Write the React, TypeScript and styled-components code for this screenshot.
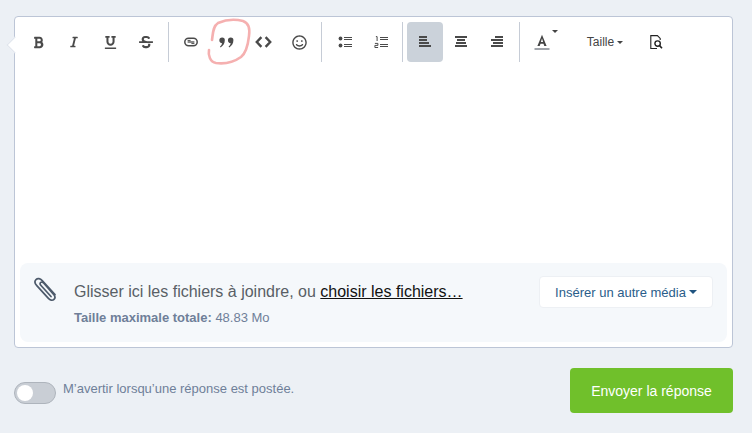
import React from 'react';
import styled, { createGlobalStyle } from 'styled-components';
import { FaBold, FaItalic, FaUnderline, FaStrikethrough, FaRegSmile } from 'react-icons/fa';

const GlobalStyle = createGlobalStyle`
  html, body {
    margin: 0;
    padding: 0;
    background: #fff;
  }
  body {
    font-family: 'Liberation Sans', Arial, sans-serif;
  }
`;

const Page = styled.div`
  position: relative;
  box-sizing: border-box;
  width: 752px;
  height: 433px;
  padding: 16px 19px 0 14px;
  background: #ecf0f5;
`;

const Editor = styled.div`
  position: relative;
  box-sizing: border-box;
  height: 332px;
  padding: 5px;
  display: flex;
  flex-direction: column;
  background: #fff;
  border: 1px solid #bcc5d6;
  border-radius: 4px;

  &::before {
    content: '';
    position: absolute;
    left: -6px;
    top: 22px;
    width: 11px;
    height: 11px;
    background: #fff;
    border-left: 1px solid #dfe4ec;
    border-bottom: 1px solid #dfe4ec;
    transform: rotate(45deg);
  }
`;

const Toolbar = styled.div`
  position: relative;
  display: flex;
  align-items: center;
  height: 40px;
`;

const ToolButton = styled.div<{ $active?: boolean; $width?: number; $shift?: number }>`
  display: flex;
  align-items: center;
  justify-content: center;
  box-sizing: border-box;
  width: ${(p) => p.$width ?? 36}px;
  height: 40px;
  flex: none;
  padding-left: ${(p) => p.$shift ?? 0}px;
  color: #4a4a4a;
  border-radius: 4px;
  background: ${(p) => (p.$active ? '#cbd2da' : 'transparent')};
`;

const Separator = styled.div<{ $left: number; $right: number }>`
  width: 1px;
  height: 40px;
  flex: none;
  margin: 0 ${(p) => p.$right}px 0 ${(p) => p.$left}px;
  background: #c6ccd6;
`;

const TailleLabel = styled.span`
  font-size: 12px;
  color: #444;
`;

const Caret = styled.span<{ $color?: string; $size?: number }>`
  display: inline-block;
  width: 0;
  height: 0;
  margin-left: 3px;
  border-left: ${(p) => p.$size ?? 3.5}px solid transparent;
  border-right: ${(p) => p.$size ?? 3.5}px solid transparent;
  border-top: ${(p) => p.$size ?? 3.5}px solid ${(p) => p.$color ?? '#444'};
`;

const ColorCaret = styled(Caret)`
  position: absolute;
  top: 8px;
  left: 529px;
`;

const Body = styled.div`
  flex: 1;
`;

const Attachments = styled.div`
  display: flex;
  align-items: flex-start;
  box-sizing: border-box;
  height: 79px;
  padding: 12px 14px 0 13px;
  background: #f5f8fb;
  border-radius: 8px;
`;

const ClipSlot = styled.div`
  flex: none;
  width: 26px;
  height: 30px;
  margin-right: 15px;
  color: #4d5a6b;
`;

const DropText = styled.div`
  flex: 1;
  padding-top: 7px;
`;

const DropLine = styled.div`
  font-size: 16px;
  line-height: 20px;
  color: #595f66;
`;

const ChooseLink = styled.span`
  color: #111;
  text-decoration: underline;
`;

const LimitLine = styled.div`
  margin-top: 8px;
  font-size: 13px;
  line-height: 16px;
  color: #6f7f99;

  b {
    font-weight: 700;
  }
`;

const MediaButton = styled.div`
  display: flex;
  align-items: center;
  justify-content: center;
  box-sizing: border-box;
  width: 174px;
  height: 32px;
  margin-top: 1px;
  font-size: 13px;
  color: #2a5d8a;
  background: #fff;
  border: 1px solid #edf0f4;
  border-radius: 4px;
`;

const Footer = styled.div`
  display: flex;
  align-items: flex-start;
  justify-content: space-between;
  padding-top: 20px;
`;

const NotifyRow = styled.div`
  display: flex;
  align-items: flex-start;
  gap: 7px;
  padding-top: 14px;
`;

const Toggle = styled.div`
  position: relative;
  box-sizing: border-box;
  width: 42px;
  height: 22px;
  background: #c9ced5;
  border: 1px solid #aeb4bc;
  border-radius: 11px;

  &::after {
    content: '';
    position: absolute;
    left: 2px;
    top: 2px;
    width: 16px;
    height: 16px;
    background: #fff;
    border-radius: 50%;
  }
`;

const NotifyText = styled.span`
  font-size: 13px;
  line-height: 13px;
  color: #6f7f99;
`;

const SendButton = styled.div`
  display: flex;
  align-items: center;
  justify-content: center;
  width: 163px;
  height: 45px;
  font-size: 14px;
  color: #fff;
  background: #70c02b;
  border-radius: 4px;
`;

// hand-drawn circle someone put over the quote button
const Scribble = styled.svg`
  position: absolute;
  left: 204px;
  top: 16px;
  filter: blur(0.3px);
  pointer-events: none;
`;

const LinkIcon = () => (
  <svg width="14" height="10" viewBox="0 0 14 10" fill="none" stroke="currentColor" strokeWidth="1.5">
    <rect x="0.8" y="1.2" width="12.4" height="7.6" rx="3.8" />
    <path d="M3.6 5h6.8" strokeWidth="1.3" />
    <path d="M3.6 3.4h3M7.4 6.6h3" strokeWidth="1" />
  </svg>
);

const QuoteIcon = () => (
  <svg width="16" height="11" viewBox="0 0 16 11" fill="currentColor">
    <path d="M3.2 0.6a2.6 2.6 0 0 1 2.6 2.7c0 3-1.6 5.8-4.2 7.1l-.6-1c1.3-1 1.9-2 2.1-3.2A2.4 2.4 0 0 1 3.2.6z" />
    <path d="M11.8 0.6a2.6 2.6 0 0 1 2.6 2.7c0 3-1.6 5.8-4.2 7.1l-.6-1c1.3-1 1.9-2 2.1-3.2a2.4 2.4 0 0 1 .1-5.6z" />
  </svg>
);

const CodeIcon = () => (
  <svg width="17" height="12" viewBox="0 0 17 12" fill="none" stroke="currentColor" strokeWidth="2.4">
    <path d="M6.4 1.2 1.8 6l4.6 4.8" />
    <path d="M10.6 1.2 15.2 6l-4.6 4.8" />
  </svg>
);

const BulletIcon = () => (
  <svg width="14" height="12" viewBox="0 0 14 12" fill="currentColor">
    <circle cx="2.5" cy="2.5" r="1.9" />
    <circle cx="2.5" cy="9.5" r="1.9" />
    <rect x="6" y="1" width="8" height="1" />
    <rect x="6" y="3" width="8" height="1" />
    <rect x="6" y="8" width="8" height="1" />
    <rect x="6" y="10" width="8" height="1" />
  </svg>
);

const NumberedIcon = () => (
  <svg width="14" height="12" viewBox="0 0 14 12" fill="none" stroke="currentColor" strokeWidth="1">
    <path d="M1.9.6h1.2V5" />
    <path d="M.9 7.4h3v2h-3v2.1h3.2" />
    <path d="M6 1.5h8M6 3.5h8M6 8.5h8M6 10.5h8" />
  </svg>
);

const AlignIcon = ({ widths, align }: { widths: number[]; align: 'left' | 'center' | 'right' }) => (
  <svg width="12" height="12" viewBox="0 0 12 12" fill="currentColor">
    {widths.map((w, i) => {
      const x = align === 'left' ? 0 : align === 'right' ? 12 - w : (12 - w) / 2;
      return <rect key={i} x={x} y={i * 3} width={w} height="2" />;
    })}
  </svg>
);

const FontColorIcon = () => (
  <svg width="16" height="16" viewBox="0 0 16 16">
    <path d="M8 .8 12.6 12h-2.3l-.8-2.2h-3L5.7 12H3.4zM8 4.6 6.9 8h2.2z" fill="#444" />
    <rect x="0.5" y="14" width="15" height="2" fill="#a0a4aa" />
  </svg>
);

const PreviewIcon = () => (
  <svg width="13" height="15" viewBox="0 0 13 15" fill="none" stroke="#222" strokeWidth="1.1">
    <path d="M7 13.5H.8V.6h6.6l2.8 2.8V5" />
    <circle cx="7.6" cy="8.6" r="2.7" strokeWidth="1.4" />
    <path d="m9.6 10.6 2.4 2.6" strokeWidth="1.6" />
  </svg>
);

const PaperclipIcon = () => (
  <svg width="26" height="28" viewBox="0 0 26 28" fill="none" stroke="currentColor" strokeWidth="1.7" strokeLinecap="round">
    <path d="M22 19.5 9.2 5.6C7.2 3.4 4.6 3 3 4.6s-1.1 4 .8 6l11.6 12.8c1.6 1.8 4 2.6 5.6 1s.9-3.7-.6-5.3L10.6 8c-.9-1-2.2-1.3-3-.5s-.5 2 .4 3l10 11" />
  </svg>
);

const App: React.FC = () => {
  return (
    <>
      <GlobalStyle />
      <Page>
        <Editor>
          <Toolbar>
            <ToolButton><FaBold size={13} /></ToolButton>
            <ToolButton><FaItalic size={12} /></ToolButton>
            <ToolButton><FaUnderline size={13} /></ToolButton>
            <ToolButton><FaStrikethrough size={14} /></ToolButton>
            <Separator $left={4} $right={4} />
            <ToolButton><LinkIcon /></ToolButton>
            <ToolButton><QuoteIcon /></ToolButton>
            <ToolButton><CodeIcon /></ToolButton>
            <ToolButton><FaRegSmile size={15} /></ToolButton>
            <Separator $left={4} $right={5} />
            <ToolButton><BulletIcon /></ToolButton>
            <ToolButton><NumberedIcon /></ToolButton>
            <Separator $left={3} $right={4} />
            <ToolButton $active><AlignIcon widths={[8, 8, 10, 12]} align="left" /></ToolButton>
            <ToolButton><AlignIcon widths={[12, 8, 10, 12]} align="center" /></ToolButton>
            <ToolButton><AlignIcon widths={[8, 12, 10, 12]} align="right" /></ToolButton>
            <Separator $left={4} $right={4} />
            <ToolButton><FontColorIcon /></ToolButton>
            <ColorCaret />
            <ToolButton $width={78} $shift={12}>
              <TailleLabel>Taille</TailleLabel>
              <Caret />
            </ToolButton>
            <ToolButton><PreviewIcon /></ToolButton>
          </Toolbar>
          <Body />
          <Attachments>
            <ClipSlot><PaperclipIcon /></ClipSlot>
            <DropText>
              <DropLine>
                Glisser ici les fichiers à joindre, ou <ChooseLink>choisir les fichiers…</ChooseLink>
              </DropLine>
              <LimitLine><b>Taille maximale totale:</b> 48.83 Mo</LimitLine>
            </DropText>
            <MediaButton>
              Insérer un autre média
              <Caret $color="#1f5480" $size={4} />
            </MediaButton>
          </Attachments>
        </Editor>
        <Footer>
          <NotifyRow>
            <Toggle />
            <NotifyText>M’avertir lorsqu’une réponse est postée.</NotifyText>
          </NotifyRow>
          <SendButton>Envoyer la réponse</SendButton>
        </Footer>
        <Scribble width="50" height="54" viewBox="0 0 50 54" fill="none">
          <path
            d="M8 24C9 17 9 10 14 7c7-3 17-4 25-2 6 2 7 8 6 15-1 9-3 17-8 21-7 5-17 7-25 6-6-1-8-8-7-13"
            stroke="#f5b0b0"
            strokeWidth="2.6"
            strokeLinecap="round"
          />
        </Scribble>
      </Page>
    </>
  );
};

export default App;
